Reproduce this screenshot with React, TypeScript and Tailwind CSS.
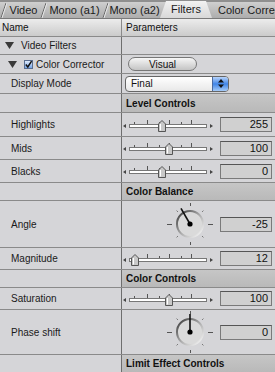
import React from "react";

const font = { fontFamily: '"Liberation Sans", Arial, sans-serif' };

const Triangle = ({ className = "" }: { className?: string }) => (
  <svg width="9" height="7" viewBox="0 0 9 7" className={className}>
    <polygon points="0,0 9,0 4.5,7" fill="#3a3a3a" />
  </svg>
);

const Checkbox = () => (
  <svg width="9" height="9" viewBox="0 0 9 9">
    <defs>
      <linearGradient id="cb" x1="0" y1="0" x2="0" y2="1">
        <stop offset="0" stopColor="#e8f1ff" />
        <stop offset="1" stopColor="#6fa0e6" />
      </linearGradient>
    </defs>
    <rect x="0.5" y="0.5" width="8" height="8" fill="url(#cb)" stroke="#5a6e90" />
    <path d="M1.8 4.6 L3.8 7 L7.6 1.2" fill="none" stroke="#111" strokeWidth="1.5" />
  </svg>
);

const Slider = ({ thumb }: { thumb: number }) => {
  const ticks = [12, 25, 37, 47, 59, 69];
  return (
    <svg width="92" height="16" viewBox="0 0 92 16">
      <polygon points="1,9 4,7 4,11" fill="#444" />
      <polygon points="91,9 88,7 88,11" fill="#444" />
      {ticks.map((t, i) => (
        <line key={t} x1={t + 0.5} x2={t + 0.5} y1={i % 2 ? 3 : 5} y2={8} stroke="#555" strokeWidth="1" />
      ))}
      <rect x="7.5" y="7.5" width="77" height="3" fill="#fff" stroke="#777" />
      <path
        d={`M${thumb - 3.5} 14.5 L${thumb - 3.5} 7 L${thumb} 3.5 L${thumb + 3.5} 7 L${thumb + 3.5} 14.5 Z`}
        fill="#c8c8c8"
        stroke="#555"
      />
      <line x1={thumb - 1.5} x2={thumb - 1.5} y1="7" y2="13.5" stroke="#fff" />
    </svg>
  );
};

const Dial = ({ angle }: { angle: number }) => {
  const cx = 26;
  const cy = 23;
  const r = 13;
  const rad = (angle * Math.PI) / 180;
  const nx = cx + Math.sin(rad) * 18;
  const ny = cy - Math.cos(rad) * 18;
  const diag = [45, 135, 225, 315].map((a) => {
    const ar = (a * Math.PI) / 180;
    return {
      x1: cx + Math.sin(ar) * 17,
      y1: cy - Math.cos(ar) * 17,
      x2: cx + Math.sin(ar) * 19,
      y2: cy - Math.cos(ar) * 19,
    };
  });
  return (
    <svg width="52" height="46" viewBox="0 0 52 46">
      <defs>
        <linearGradient id="ring" x1="0" y1="0" x2="1" y2="1">
          <stop offset="0" stopColor="#333" />
          <stop offset="0.5" stopColor="#aaa" />
          <stop offset="1" stopColor="#fff" />
        </linearGradient>
      </defs>
      <line x1="3" x2="8" y1={cy + 0.5} y2={cy + 0.5} stroke="#555" />
      <line x1="44" x2="49" y1={cy + 0.5} y2={cy + 0.5} stroke="#555" />
      <line x1={cx + 0.5} x2={cx + 0.5} y1="2" y2="5" stroke="#555" />
      <line x1={cx + 0.5} x2={cx + 0.5} y1="41" y2="44" stroke="#555" />
      {diag.map((d, i) => (
        <line key={i} {...d} stroke="#777" />
      ))}
      <circle cx={cx} cy={cy} r={r} fill="#dadada" stroke="url(#ring)" strokeWidth="2" />
      <line x1={cx} y1={cy} x2={nx} y2={ny} stroke="#111" strokeWidth="1.6" />
      <circle cx={cx} cy={cy} r="2.6" fill="#000" />
    </svg>
  );
};

const ValueBox = ({ v }: { v: string }) => (
  <div className="ml-auto mr-[3px] flex h-[15px] w-[52px] items-center justify-end border border-[#7a7a7a] border-t-[#555] bg-[#d0d0d0] pr-[3px] text-[11px] text-[#111]">
    {v}
  </div>
);

const Row = ({
  h,
  left,
  right,
  section = false,
}: {
  h: number;
  left?: React.ReactNode;
  right?: React.ReactNode;
  section?: boolean;
}) => (
  <div className="flex border-b border-[#8a8a8a]" style={{ height: h }}>
    <div className="flex w-[122px] shrink-0 items-center border-r border-[#6e6e6e] bg-[#d5d5d8] text-[10px] text-[#1a1a1a]">
      {left}
    </div>
    <div
      className={
        section
          ? "flex flex-1 items-center bg-gradient-to-b from-[#c6c6c6] to-[#b9b9b9] pl-[4px] text-[10px] font-bold text-[#111]"
          : "flex flex-1 items-center bg-[#d5d5d8] text-[10px] text-[#111]"
      }
    >
      {right}
    </div>
  </div>
);

const Sep = () => (
  <svg width="7" height="16" viewBox="0 0 7 16" className="shrink-0">
    <line x1="1" y1="16" x2="6" y2="1" stroke="#6a6a6a" />
    <line x1="2" y1="16" x2="7" y2="1" stroke="#e6e6e6" />
  </svg>
);

const Tabs = () => (
  <div className="flex h-[19px] items-end overflow-hidden whitespace-nowrap border-b border-[#7a7a7a] bg-[#8f8f8f] text-[11px] text-[#1a1a1a]">
    <div className="flex h-[16px] flex-1 items-center bg-gradient-to-b from-[#cfcfcf] to-[#adadad]">
      <Sep />
      <span className="w-[33px] shrink-0 text-center">Video</span>
      <Sep />
      <span className="w-[55px] shrink-0 text-center">Mono (a1)</span>
      <Sep />
      <span className="w-[51px] shrink-0 text-center">Mono (a2)</span>
      <div className="flex h-[17px] w-[52px] shrink-0 items-center justify-center self-end bg-gradient-to-b from-[#f2f2f2] to-[#d8d8d8] [clip-path:polygon(6px_0,calc(100%-6px)_0,100%_100%,0_100%)]">
        Filters
      </div>
      <span className="shrink-0 pl-[6px]">Color Corrector</span>
    </div>
  </div>
);

export default function App() {
  return (
    <div className="h-[372px] w-[275px] overflow-hidden bg-[#d5d5d8]" style={font}>
      <Tabs />
      <div className="flex h-[18px] border-b border-[#8a8a8a] bg-gradient-to-b from-[#ececec] to-[#cbcbcb] text-[10px] text-[#111]">
        <div className="flex w-[122px] items-center border-r border-[#8a8a8a] pl-[2px]">Name</div>
        <div className="flex items-center pl-[4px]">Parameters</div>
      </div>
      <Row
        h={18}
        left={
          <>
            <Triangle className="ml-[5px]" />
            <span className="ml-[7px]">Video Filters</span>
          </>
        }
      />
      <Row
        h={19}
        left={
          <>
            <Triangle className="ml-[8px]" />
            <span className="ml-[7px] flex">
              <Checkbox />
            </span>
            <span className="ml-[3px]">Color Corrector</span>
          </>
        }
        right={
          <div className="ml-[6px] flex h-[14px] w-[69px] items-center justify-center rounded-full border border-[#777] bg-gradient-to-b from-[#f6f6f6] to-[#c4c4c4] text-[10px]">
            Visual
          </div>
        }
      />
      <Row
        h={20}
        left={<span className="pl-[11px]">Display Mode</span>}
        right={
          <div className="ml-[3px] flex h-[16px] w-[104px] items-center overflow-hidden rounded-[4px] border border-[#666] bg-gradient-to-b from-[#ffffff] to-[#e8e8e8]">
            <span className="flex-1 pl-[5px] text-[10px]">Final</span>
            <div className="flex h-full w-[16px] flex-col items-center justify-center gap-[2px] border-l border-[#4a6aa0] bg-gradient-to-b from-[#b8d4fa] via-[#3f84e6] to-[#a6cbf7]">
              <svg width="6" height="9" viewBox="0 0 6 9">
                <polygon points="3,0 6,3.5 0,3.5" fill="#111" />
                <polygon points="3,9 6,5.5 0,5.5" fill="#111" />
              </svg>
            </div>
          </div>
        }
      />
      <Row h={19} section right="Level Controls" />
      <Row h={24} left={<span className="pl-[11px]">Highlights</span>} right={<><Slider thumb={40} /><ValueBox v="255" /></>} />
      <Row h={23} left={<span className="pl-[11px]">Mids</span>} right={<><Slider thumb={47} /><ValueBox v="100" /></>} />
      <Row h={23} left={<span className="pl-[11px]">Blacks</span>} right={<><Slider thumb={40} /><ValueBox v="0" /></>} />
      <Row h={18} section right="Color Balance" />
      <Row
        h={47}
        left={<span className="pl-[11px]">Angle</span>}
        right={<><div className="ml-[42px] flex"><Dial angle={-30} /></div><ValueBox v="-25" /></>}
      />
      <Row h={22} left={<span className="pl-[11px]">Magnitude</span>} right={<><Slider thumb={13} /><ValueBox v="12" /></>} />
      <Row h={18} section right="Color Controls" />
      <Row h={22} left={<span className="pl-[11px]">Saturation</span>} right={<><Slider thumb={47} /><ValueBox v="100" /></>} />
      <Row
        h={45}
        left={<span className="pl-[11px]">Phase shift</span>}
        right={<><div className="ml-[42px] flex"><Dial angle={0} /></div><ValueBox v="0" /></>}
      />
      <Row h={18} section right="Limit Effect Controls" />
    </div>
  );
}
